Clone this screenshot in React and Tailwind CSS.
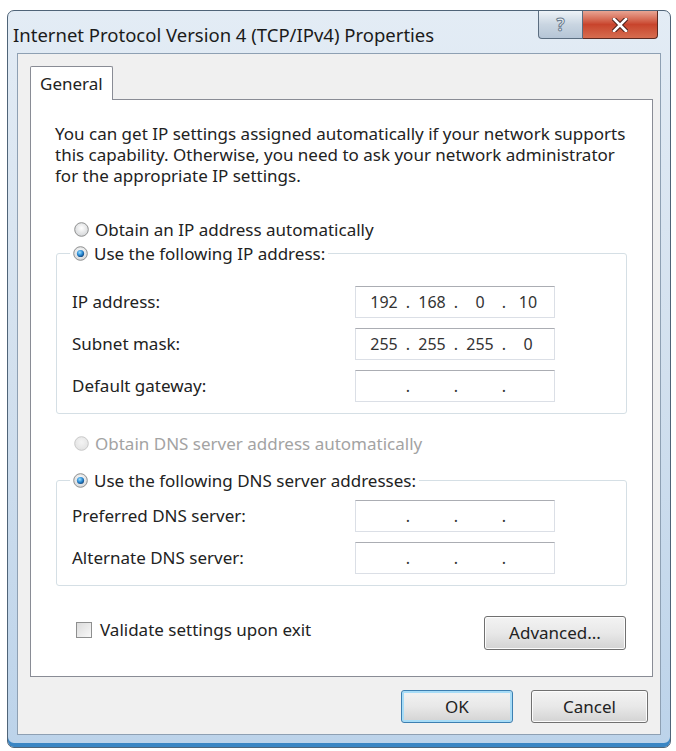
import { useState } from 'react'

const font = { fontFamily: '"Noto Sans", "DejaVu Sans", sans-serif' }

function Radio({ checked, disabled }) {
  const id = checked ? 'rOn' : disabled ? 'rDis' : 'rOff'
  return (
    <svg width="15" height="15" viewBox="0 0 15 15" className="shrink-0">
      <defs>
        <radialGradient id={id} cx="50%" cy="40%" r="60%">
          <stop offset="0%" stopColor={disabled ? '#f4f4f4' : '#ffffff'} />
          <stop offset="100%" stopColor={disabled ? '#e2e2e2' : '#d4d6d8'} />
        </radialGradient>
        <radialGradient id="dot" cx="40%" cy="35%" r="70%">
          <stop offset="0%" stopColor="#9fe1ff" />
          <stop offset="55%" stopColor="#2a8ad4" />
          <stop offset="100%" stopColor="#0f3f74" />
        </radialGradient>
      </defs>
      <circle cx="7.5" cy="7.5" r="6.8" fill={`url(#${id})`} stroke={disabled ? '#c8c8c8' : '#8e8f8f'} strokeWidth="1" />
      {checked && <circle cx="7.5" cy="7.5" r="3.6" fill="url(#dot)" />}
    </svg>
  )
}

function IpBox({ parts }) {
  return (
    <div className="flex h-[32px] w-[200px] items-center border border-[#dbdfe6] border-t-[#abadb3] bg-white px-[8px] text-[16px] text-[#333]">
      {[0, 1, 2, 3].map((i) => (
        <div key={i} className="flex items-center">
          <span className="w-[40px] text-center">{parts ? parts[i] : ''}</span>
          {i < 3 && <span className="w-[8px] text-center">.</span>}
        </div>
      ))}
    </div>
  )
}

function Row({ label, parts }) {
  return (
    <div className="flex items-center">
      <span className="w-[283px] text-[17px]">{label}</span>
      <IpBox parts={parts} />
    </div>
  )
}

function WinButton({ children, primary, className = '' }) {
  return (
    <button
      className={`flex items-center justify-center rounded-[3px] border text-[17px] text-[#222] bg-gradient-to-b from-[#f3f3f3] via-[#e8e8e8] to-[#d3d3d3] ${
        primary ? 'border-[#3c7fb1] shadow-[inset_0_0_0_2px_#a7dcf7]' : 'border-[#707070] shadow-[inset_0_0_0_1px_#fcfcfc]'
      } ${className}`}
    >
      {children}
    </button>
  )
}

export default function App() {
  const [validate, setValidate] = useState(false)

  return (
    <div className="h-[751px] w-[676px] bg-white pl-[7px] pr-[5px] pt-[10px] pb-[3px]" style={font}>
      <div className="flex h-full flex-col rounded-[7px] border border-[#4f6478] bg-gradient-to-b from-[#e3ecf5] via-[#d2e0ee] to-[#bcd3ea] shadow-[inset_0_-4px_0_#3a86c4]">
        {/* title bar */}
        <div className="flex h-[42px] shrink-0 items-start">
          <div className="flex-1 pl-[5px] pt-[10px] text-[18.5px] text-[#1b1b1b]">
            Internet Protocol Version 4 (TCP/IPv4) Properties
          </div>
          <div className="mr-[12px] flex h-[28px]">
            <div className="flex w-[45px] items-center justify-center rounded-bl-[4px] border border-t-0 border-[#5b6d80] bg-gradient-to-b from-[#eef3f8] via-[#c9d5e1] to-[#b5c5d6]">
              <span className="text-[17px] font-bold text-[#eef2f6] [-webkit-text-stroke:1px_#6b7c8e]">?</span>
            </div>
            <div className="flex w-[75px] items-center justify-center rounded-br-[4px] border border-l-0 border-t-0 border-[#5b2a22] bg-gradient-to-b from-[#e8a493] via-[#c8442c] to-[#d66c4f]">
              <svg width="16" height="14" viewBox="0 0 16 14">
                <path d="M2 1 L14 13 M14 1 L2 13" stroke="#4b2018" strokeWidth="4.6" strokeLinecap="square" />
                <path d="M2 1 L14 13 M14 1 L2 13" stroke="#ffffff" strokeWidth="2.6" strokeLinecap="square" />
              </svg>
            </div>
          </div>
        </div>

        {/* client */}
        <div className="mx-[9px] mb-[12px] flex flex-1 flex-col border border-[#8ea0b3] bg-[#f0f0f0] pl-[12px] pr-[7px] pt-[12px] text-[#222]">
          <div className="flex">
            <div className="relative z-10 -mb-px flex h-[34px] w-[83px] items-center rounded-t-[2px] border border-b-0 border-[#898c95] bg-white pl-[9px] text-[17px]">
              General
            </div>
          </div>
          <div className="flex h-[578px] flex-col border border-[#898c95] bg-white">
            <p className="pl-[24px] pr-[6px] pt-[23px] text-[17px] leading-[21px] whitespace-nowrap">
              You can get IP settings assigned automatically if your network supports
              <br />
              this capability. Otherwise, you need to ask your network administrator
              <br />
              for the appropriate IP settings.
            </p>

            <div className="ml-[43px] mt-[33px] flex h-[21px] items-center gap-[6px] text-[17px]">
              <Radio />
              <span>Obtain an IP address automatically</span>
            </div>

            <div className="relative mx-[25px] mt-[13px] flex h-[161px] flex-col gap-[10px] rounded-[3px] border border-[#d5dfe5] pl-[15px] pt-[32px]">
              <div className="absolute -top-[11px] left-[13px] flex h-[21px] items-center gap-[6px] bg-white px-[3px] text-[17px]">
                <Radio checked />
                <span>Use the following IP address:</span>
              </div>
              <Row label="IP address:" parts={['192', '168', '0', '10']} />
              <Row label="Subnet mask:" parts={['255', '255', '255', '0']} />
              <Row label="Default gateway:" />
            </div>

            <div className="ml-[43px] mt-[19px] flex h-[21px] items-center gap-[6px] text-[17px] text-[#a3a3a3]">
              <Radio disabled />
              <span>Obtain DNS server address automatically</span>
            </div>

            <div className="relative mx-[25px] mt-[26px] flex h-[106px] flex-col gap-[10px] rounded-[3px] border border-[#d5dfe5] pl-[15px] pt-[19px]">
              <div className="absolute -top-[11px] left-[13px] flex h-[21px] items-center gap-[6px] bg-white px-[3px] text-[17px]">
                <Radio checked />
                <span>Use the following DNS server addresses:</span>
              </div>
              <Row label="Preferred DNS server:" />
              <Row label="Alternate DNS server:" />
            </div>

            <div className="mt-[30px] flex items-start pl-[45px] pr-[26px]">
              <label className="mt-[1px] flex flex-1 cursor-pointer items-center gap-[8px] text-[17px]">
                <span
                  onClick={() => setValidate(!validate)}
                  className="flex h-[16px] w-[16px] items-center justify-center border border-[#8e8f8f] bg-gradient-to-br from-[#dcdcdc] to-[#f8f8f8] text-[12px] leading-none text-[#1a5a9a]"
                >
                  {validate ? '✓' : ''}
                </span>
                Validate settings upon exit
              </label>
              <WinButton className="h-[34px] w-[142px]">Advanced...</WinButton>
            </div>
          </div>

          <div className="mt-[13px] flex justify-end gap-[18px] pr-[5px]">
            <WinButton primary className="h-[33px] w-[112px]">OK</WinButton>
            <WinButton className="h-[33px] w-[117px]">Cancel</WinButton>
          </div>
        </div>
      </div>
    </div>
  )
}
